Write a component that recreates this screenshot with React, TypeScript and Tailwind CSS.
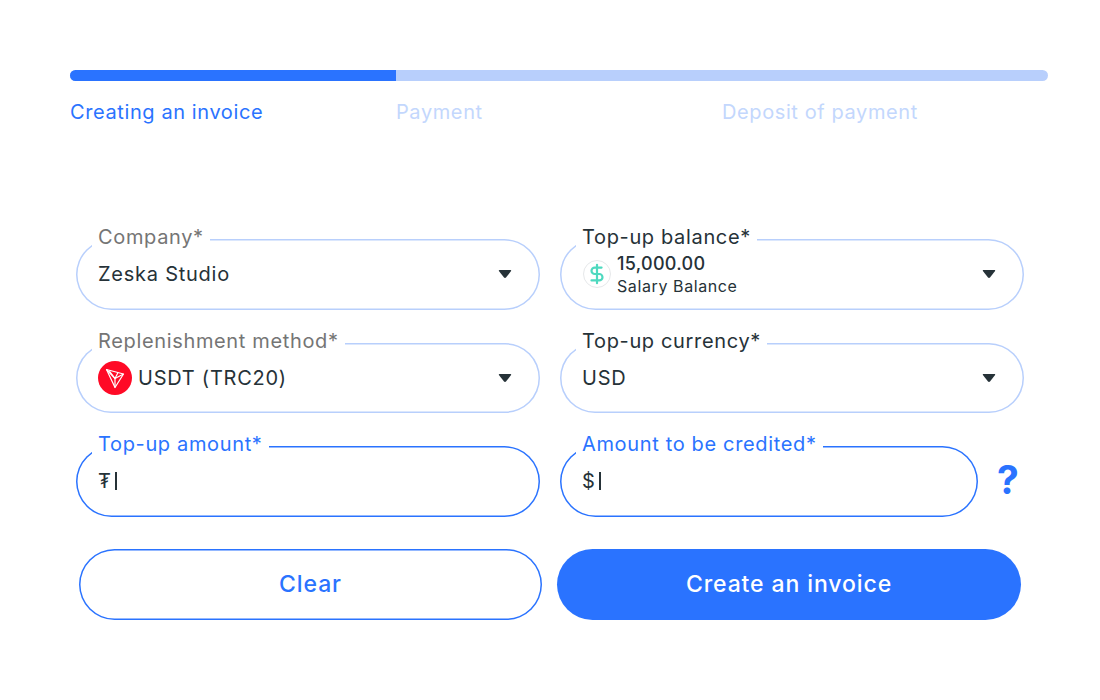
import { DollarSign } from "lucide-react";
import type { ReactNode } from "react";

const font = { fontFamily: '"Inter", "Liberation Sans", sans-serif' };

function Caret() {
  return (
    <svg width="14" height="10" viewBox="0 0 14 10" className="shrink-0">
      <path d="M1.500 1h11c.6 0 .9.6.6 1.100L8 8.600c-.5.6-1.500.6-2 0L.9 2.100C.6 1.600.9 1 1.500 1z" fill="#263238" />
    </svg>
  );
}

function TronIcon() {
  return (
    <span className="flex h-[34px] w-[34px] shrink-0 items-center justify-center rounded-full bg-[#ff0a26]">
      <svg width="24" height="24" viewBox="0 0 24 24" fill="none" stroke="#fff" strokeWidth="1.2" strokeLinejoin="round">
        <path d="M3.500 3.500l17 4.500L12 21.500 3.500 3.500z" />
        <path d="M3.500 3.500l8.500 9 8.500-4.500" />
        <path d="M12 12.500l0 9" />
        <path d="M6 4.500l6 8 3-6" />
      </svg>
    </span>
  );
}

function Field({
  label,
  active,
  muted,
  children,
  caret,
}: {
  label: string;
  active?: boolean;
  muted?: boolean;
  children: ReactNode;
  caret?: boolean;
}) {
  const labelColor = active ? "text-[#2a73ff]" : muted ? "text-[#757575]" : "text-[#263238]";
  return (
    <div
      className={`relative flex h-[70.5px] items-center justify-between rounded-[36px] pl-[22px] pr-[28px] ${
        active ? "shadow-[inset_0_0_0_1.5px_#2a73ff]" : "shadow-[inset_0_0_0_1.5px_#b8cffc]"
      }`}
    >
      <span
        className={`absolute left-[16px] top-[-14px] bg-white pl-[6px] pr-[6px] text-[20px] leading-[24px] tracking-[0.65px] ${labelColor}`}
      >
        {label}
      </span>
      <div className="flex min-w-0 items-center text-[20px] tracking-[0.75px] text-[#263238]">{children}</div>
      {caret && <Caret />}
    </div>
  );
}

export default function App() {
  return (
    <div className="min-h-[700px] bg-white pl-[70px] pr-[52px] pt-[70px]" style={font}>
      <div className="flex h-[11px] w-[978px] overflow-hidden rounded-full bg-[#b8cffc]">
        <div className="w-[326px] bg-[#2a73ff]" />
      </div>
      <div className="mt-[18px] grid w-[978px] grid-cols-3 text-[20px] leading-[26px] tracking-[0.6px]">
        <span className="text-[#2a73ff]">Creating an invoice</span>
        <span className="text-[#c3d7fd]">Payment</span>
        <span className="text-[#c3d7fd]">Deposit of payment</span>
      </div>

      <div className="ml-[6px] mt-[114px] grid w-[948px] grid-cols-2 gap-x-5 gap-y-[33px]">
        <Field label="Company*" muted caret>
          Zeska Studio
        </Field>
        <Field label="Top-up balance*" caret>
          <span className="ml-px mr-[6px] flex h-[28px] w-[28px] shrink-0 items-center justify-center rounded-full border border-[#e6e8ea]">
            <DollarSign size={22} color="#4ed9bf" strokeWidth={2.4} />
          </span>
          <span className="mt-[2px] flex flex-col">
            <span className="text-[18px] font-medium leading-[22px] tracking-[0.3px]">15,000.00</span>
            <span className="text-[16px] leading-[22px] tracking-[0.6px]">Salary Balance</span>
          </span>
        </Field>
        <Field label="Replenishment method*" muted caret>
          <TronIcon />
          <span className="ml-[6px]">USDT (TRC20)</span>
        </Field>
        <Field label="Top-up currency*" caret>
          USD
        </Field>
        <Field label="Top-up amount*" active>
          ₮<span className="ml-[3px] h-[18px] w-[2px] bg-[#263238]" />
        </Field>
        <div className="flex items-center">
          <div className="flex-1">
            <Field label="Amount to be credited*" active>
              $<span className="ml-[3px] h-[18px] w-[2px] bg-[#263238]" />
            </Field>
          </div>
          <span className="mb-[4px] ml-[19px] w-[27px] text-left text-[39px] font-bold leading-none text-[#2a73ff]">?</span>
        </div>
      </div>

      <div className="ml-[9px] mt-[32.5px] grid w-[942px] grid-cols-[463px_464px] gap-[15px] text-[23px] font-medium tracking-[0.9px]">
        <button className="h-[71px] rounded-[36px] bg-white text-[#2a73ff] shadow-[inset_0_0_0_1.5px_#2a73ff]">Clear</button>
        <button className="h-[71px] rounded-[36px] bg-[#2a73ff] text-white">Create an invoice</button>
      </div>
    </div>
  );
}
